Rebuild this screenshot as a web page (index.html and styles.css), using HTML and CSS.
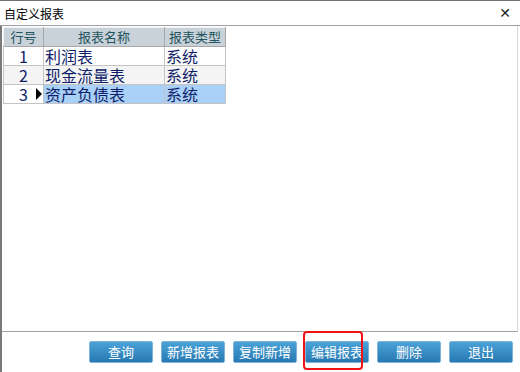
FILE: index.html
```html
<!DOCTYPE html>
<html lang="zh-CN">
<head>
  <meta charset="UTF-8" />
  <title>自定义报表</title>
  <link rel="stylesheet" href="styles.css">
</head>
<body>
  <div class="window">
    <div class="titlebar">
      <span class="title">自定义报表</span>
      <span class="close">&#x2715;</span>
    </div>
    <div class="content">
      <div class="grid">
        <table>
          <thead>
            <tr>
              <th class="col-no">行号</th>
              <th class="col-name">报表名称</th>
              <th class="col-type">报表类型</th>
            </tr>
          </thead>
          <tbody>
            <tr>
              <td class="no">1</td>
              <td>利润表</td>
              <td>系统</td>
            </tr>
            <tr class="alt">
              <td class="no">2</td>
              <td>现金流量表</td>
              <td>系统</td>
            </tr>
            <tr class="selected">
              <td class="no">3<span class="pointer"></span></td>
              <td>资产负债表</td>
              <td>系统</td>
            </tr>
          </tbody>
        </table>
      </div>
      <div class="toolbar">
        <button class="btn">查询</button>
        <button class="btn">新增报表</button>
        <button class="btn">复制新增</button>
        <button class="btn marked">编辑报表</button>
        <button class="btn">删除</button>
        <button class="btn">退出</button>
      </div>
    </div>
  </div>
</body>
</html>
```

FILE: styles.css
```css
body {
  margin: 0;
  font-family: "Noto Sans CJK SC", "Noto Sans", sans-serif;
  background-color: #ffffff;
}
.window {
  width: 520px;
  height: 372px;
  display: flex;
  flex-direction: column;
  box-sizing: border-box;
  overflow: hidden;
}
.titlebar {
  height: 26px;
  flex: none;
  box-sizing: border-box;
  border-top: 1px solid #6e6e6e;
  border-bottom: 1px solid #a0a0a0;
  display: flex;
  align-items: center;
  justify-content: space-between;
  padding: 0 9px 0 4px;
  color: #000000;
}
.title {
  font-size: 12px;
}
.close {
  font-size: 14px;
  font-family: "DejaVu Sans", sans-serif;
  color: #222222;
}
.content {
  flex: 1;
  display: flex;
  flex-direction: column;
  border-left: 2px solid #7a7a7a;
}
.grid {
  flex: 1;
  padding: 1px 0 0 1px;
  border-right: 1px solid #d8d8d8;
  margin-right: 2px;
  border-bottom: 1px solid #a0a0a0;
}
table {
  border-collapse: collapse;
  font-size: 16px;
  color: #101e6a;
}
th {
  background-color: #c9d1d9;
  color: #235560;
  font-weight: normal;
  font-size: 13px;
  height: 18px;
  padding: 0;
  border: 1px solid #a8a8a8;
  border-top-color: #f2f2f2;
  border-left-color: #f2f2f2;
  line-height: 18px;
}
.col-no {
  width: 39px;
}
.col-name {
  width: 120px;
}
.col-type {
  width: 60px;
}
td {
  height: 18px;
  padding: 0 0 0 1px;
  border: 1px solid #c4c4c4;
  line-height: 18px;
  white-space: nowrap;
}
td.no {
  text-align: center;
  position: relative;
  padding: 0;
}
tr.alt td {
  background-color: #f4f4f4;
}
tr.selected td {
  background-color: #a9d0f7;
}
tr.selected td.no {
  background-color: #ffffff;
}
.pointer {
  position: absolute;
  right: 1px;
  top: 3px;
  width: 0;
  height: 0;
  border-top: 6px solid transparent;
  border-bottom: 6px solid transparent;
  border-left: 6px solid #000000;
}
.toolbar {
  height: 40px;
  flex: none;
  display: flex;
  justify-content: flex-end;
  gap: 8px;
  padding: 9px 7px 0 0;
  box-sizing: border-box;
  position: relative;
}
.btn {
  width: 64px;
  height: 22px;
  padding: 0;
  border: 1px solid #7fb4da;
  border-radius: 2px;
  background: linear-gradient(#4ba3d8, #2778b1);
  color: #ffffff;
  font-family: "Noto Sans CJK SC", sans-serif;
  font-size: 13px;
  line-height: 20px;
  cursor: pointer;
}
.marked {
  position: relative;
}
.marked::after {
  content: "";
  position: absolute;
  left: -3px;
  top: -11px;
  width: 56px;
  height: 35px;
  border: 2px solid #f01414;
  border-radius: 4px;
}
```
